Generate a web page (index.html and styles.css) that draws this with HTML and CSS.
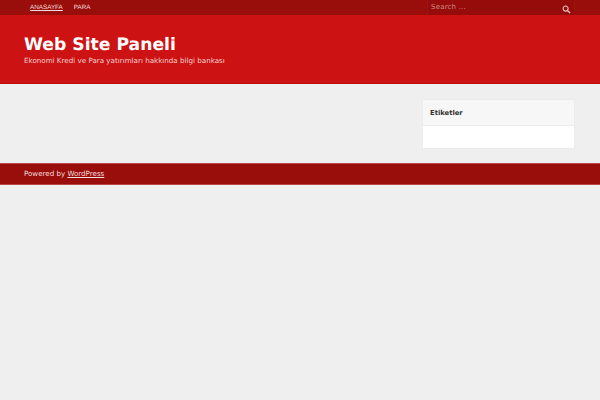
FILE: index.html
```html
<!DOCTYPE html>
<html lang="tr">
<head>
<meta charset="utf-8">
<title>Web Site Paneli</title>
<link rel="stylesheet" href="styles.css">
</head>
<body>
<nav class="topbar">
  <div class="menu">
    <a class="menu-link current" href="#">ANASAYFA</a>
    <a class="menu-link" href="#">PARA</a>
  </div>
  <form class="search">
    <span class="search-text">Search ...</span>
    <svg class="search-icon" viewBox="0 0 10 10" width="9" height="9"><circle cx="4" cy="4" r="2.8" fill="none" stroke="#eec4c2" stroke-width="1.2"/><path d="M6 6l3 3" stroke="#eec4c2" stroke-width="1.6"/></svg>
  </form>
</nav>
<header class="masthead">
  <h1 class="site-title">Web Site Paneli</h1>
  <p class="tagline">Ekonomi Kredi ve Para yatırımları hakkında bilgi bankası</p>
</header>
<main class="content">
  <aside class="widget">
    <h2 class="widget-title">Etiketler</h2>
    <div class="widget-body"></div>
  </aside>
</main>
<footer class="footer">Powered by <a href="#">WordPress</a></footer>
</body>
</html>
```
FILE: styles.css
```css
* { box-sizing: border-box; }
html, body { margin: 0; height: 100%; }
body { background: #efefef; font-family: "DejaVu Sans", sans-serif; color: #333; overflow: hidden; text-rendering: geometricPrecision; }
.topbar { height: 15px; background: #990d0b; display: flex; justify-content: space-between; padding: 0 25px 0 24px; }
.menu { display: flex; gap: 11px; padding-left: 6px; align-items: center; }
.menu-link { font: 6.3px/15px "Liberation Sans", sans-serif; color: #f5dddd; text-decoration: none; }
.menu-link.current { text-decoration: underline; }
.search { width: 148px; height: 15px; background: #950c0a; border-left: 1px solid #a01210; border-right: 1px solid #a01210; display: flex; align-items: center; justify-content: space-between; padding: 0 3px 0 3px; }
.search-text { font-size: 7px; color: #cf8a88; letter-spacing: 0.2px; margin-top: -2px; }
.search-icon { margin-top: 3px; }
.masthead { height: 69px; background: #cc1212; border-bottom: 1px solid #b81010; padding: 20px 24px 0; color: #fff; }
.site-title { margin: 0; font-size: 17.2px; line-height: 20px; font-weight: 700; }
.tagline { margin: 1px 0 0; font-size: 7.15px; line-height: 10px; color: #f3d0d0; }
.content { height: 79px; display: flex; justify-content: flex-end; padding: 15px 25px 0 0; }
.widget { width: 153px; height: 50px; background: #fff; border: 1px solid #ececec; }
.widget-title { margin: 0; height: 26px; font-size: 6.8px; line-height: 26px; padding-left: 7px; font-weight: 700; color: #333; background: #f7f7f7; border-bottom: 1px solid #ececec; }
.footer { height: 22px; background: #990d0b; border-top: 1px solid #b84a48; border-bottom: 1px solid #b84a48; padding-left: 24px; font-size: 7.1px; line-height: 20px; color: #f5dcdc; }
.footer a { color: #f5dcdc; }
```
